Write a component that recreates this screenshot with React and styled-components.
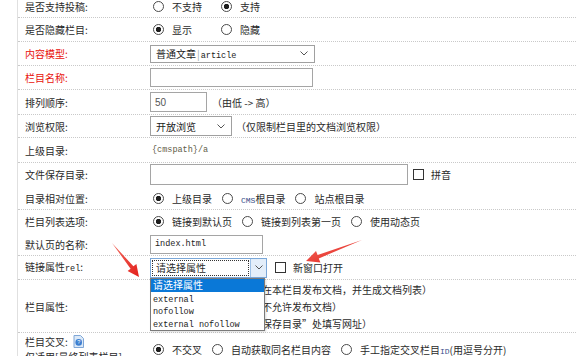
import styled, { createGlobalStyle } from "styled-components";

const Global = createGlobalStyle`
  html, body { margin: 0; padding: 0; background: #fff; }
  body {
    font-family: "Noto Sans CJK SC", "Noto Sans", sans-serif;
    font-size: 10px;
    color: #2a2a2a;
    overflow: hidden;
  }
`;

const Chevron = () => (
  <svg width="8" height="5" viewBox="0 0 8 5">
    <polyline points="0.5,0.5 4,4 7.5,0.5" fill="none" stroke="#555" strokeWidth="1" />
  </svg>
);

const HelpIcon = () => (
  <svg width="11" height="13" viewBox="0 0 11 13">
    <path d="M1 0.5 H7.5 L10.5 3.5 V12.5 H1 Z" fill="#dbe9f8" stroke="#7fa6d6" />
    <circle cx="5.7" cy="7.4" r="3.3" fill="#3d7fd0" />
    <text x="5.7" y="9.4" fontSize="5.5" fill="#fff" textAnchor="middle" fontFamily="Liberation Sans">?</text>
  </svg>
);

const App = () => {
  return (
    <Page>
      <Global />
      <Form>
        <Row $h={22}>
          <Label>是否支持投稿:</Label>
          <Cell>
            <Option $w={58}><Radio />不支持</Option>
            <Option><Radio $on />支持</Option>
          </Cell>
        </Row>
        <Row>
          <Label>是否隐藏栏目:</Label>
          <Cell>
            <Option $w={58}><Radio $on />显示</Option>
            <Option><Radio />隐藏</Option>
          </Cell>
        </Row>
        <Row>
          <Label $red>内容模型:</Label>
          <Cell>
            <SelectBox $w={165} $h={18}>
              <span>普通文章<Pipe>|</Pipe><Mono>article</Mono></span>
              <Chevron />
            </SelectBox>
          </Cell>
        </Row>
        <Row>
          <Label $red>栏目名称:</Label>
          <Cell>
            <Field $w={163} $h={19} />
          </Cell>
        </Row>
        <Row $h={25}>
          <Label>排列顺序:</Label>
          <Cell>
            <Field $w={57} $h={20}><Num>50</Num></Field>
            <Note>（由低 -&gt; 高）</Note>
          </Cell>
        </Row>
        <Row $h={23}>
          <Label>浏览权限:</Label>
          <Cell>
            <SelectBox $w={82} $h={20}>
              <span>开放浏览</span>
              <Chevron />
            </SelectBox>
            <Note $gap={4}>（仅限制栏目里的文档浏览权限）</Note>
          </Cell>
        </Row>
        <Row $h={25}>
          <Label>上级目录:</Label>
          <Cell>
            <Path>{"{cmspath}/a"}</Path>
          </Cell>
        </Row>
        <Row $noLine>
          <Label>文件保存目录:</Label>
          <Cell>
            <Field $w={258} $h={21} />
            <Check $ml={5} />
            <span>拼音</span>
          </Cell>
        </Row>
        <Row $h={23}>
          <Label>目录相对位置:</Label>
          <Cell>
            <Option><Radio $on />上级目录</Option>
            <Option><Radio /><span><Cms>CMS</Cms>根目录</span></Option>
            <Option><Radio />站点根目录</Option>
          </Cell>
        </Row>
        <Row $h={23} $noLine>
          <Label>栏目列表选项:</Label>
          <Cell>
            <Option><Radio $on />链接到默认页</Option>
            <Option><Radio />链接到列表第一页</Option>
            <Option><Radio />使用动态页</Option>
          </Cell>
        </Row>
        <Row $h={23}>
          <Label>默认页的名称:</Label>
          <Cell>
            <Field $w={113} $h={19}><Mono>index.html</Mono></Field>
          </Cell>
        </Row>
        <Row>
          <Label>链接属性<Mono>rel</Mono>:</Label>
          <Cell>
            <RelSelect>
              <Focus>请选择属性</Focus>
              <DropBtn><Chevron /></DropBtn>
            </RelSelect>
            <Check $ml={8} />
            <span>新窗口打开</span>
          </Cell>
        </Row>
        <Row $h={53}>
          <Label>栏目属性:</Label>
          <Stack>
            <Option $line><Radio $on />最终列表栏目（允许在本栏目发布文档，并生成文档列表）</Option>
            <Option $line><Radio />频道封面（栏目本身不允许发布文档）</Option>
            <Option $line><Radio />外部连接（在“文件保存目录”处填写网址）</Option>
          </Stack>
        </Row>
        <Row $h={33} $noLine>
          <Label>
            <LabelLine>栏目交叉: <HelpIcon /></LabelLine>
            <LabelLine>仅适用[最终列表栏目]</LabelLine>
          </Label>
          <Cell>
            <Option><Radio $on />不交叉</Option>
            <Option><Radio />自动获取同名栏目内容</Option>
            <Option><Radio /><span>手工指定交叉栏目<Cms>ID</Cms>(用逗号分开)</span></Option>
          </Cell>
        </Row>
      </Form>

      <DropList>
        <DropItem $active>请选择属性</DropItem>
        <DropItem><Mono>external</Mono></DropItem>
        <DropItem><Mono>nofollow</Mono></DropItem>
        <DropItem><Mono>external nofollow</Mono></DropItem>
      </DropList>

      <Arrows width="576" height="356" viewBox="0 0 576 356">
        <defs>
          <linearGradient id="ar" x1="0" y1="0" x2="1" y2="1">
            <stop offset="0" stopColor="#f26a5e" />
            <stop offset="1" stopColor="#e3201b" />
          </linearGradient>
        </defs>
        <polygon
          points="112,243 133.4,266.3 136.4,263.9 139,277 127.6,271.1 130.6,268.7"
          fill="url(#ar)"
        />
        <polygon
          points="362,240 317.6,255 316,251 306,261 320.4,262.4 318.8,258.4"
          fill="url(#ar)"
        />
      </Arrows>
    </Page>
  );
};

export default App;

const Page = styled.div`
  position: relative;
  width: 576px;
  height: 356px;
  overflow: hidden;
`;

const Form = styled.div`
  margin-left: 17px;
  margin-top: -4px;
  border-left: 1px solid #e0e0e0;
`;

const Row = styled.div`
  display: grid;
  grid-template-columns: 132px 1fr;
  align-items: center;
  box-sizing: border-box;
  height: ${(p) => p.$h || 24}px;
  border-bottom: ${(p) => (p.$noLine ? "1px solid transparent" : "1px dotted #c9c9c9")};
`;

const Label = styled.div`
  padding-left: 7px;
  color: ${(p) => (p.$red ? "#e8120c" : "#2a2a2a")};
  line-height: 15px;
  white-space: nowrap;
`;

const LabelLine = styled.div`
  display: flex;
  align-items: center;
  gap: 5px;
  height: 15px;
`;

const Cell = styled.div`
  display: flex;
  align-items: center;
  white-space: nowrap;
`;

const Stack = styled.div`
  display: flex;
  flex-direction: column;
`;

const Option = styled.label`
  display: inline-flex;
  align-items: center;
  gap: 8px;
  margin-left: 3px;
  margin-right: 7px;
  min-width: ${(p) => (p.$w ? `${p.$w}px` : "auto")};
  height: ${(p) => (p.$line ? "17px" : "auto")};
  white-space: nowrap;
`;

const Radio = styled.span`
  flex: none;
  width: 11px;
  height: 11px;
  box-sizing: border-box;
  border-radius: 50%;
  border: 1px solid #4a4a4a;
  background: ${(p) =>
    p.$on ? "radial-gradient(circle, #1e1e1e 0 2.4px, #fff 3px)" : "#fff"};
`;

const Check = styled.span`
  flex: none;
  width: 11px;
  height: 11px;
  box-sizing: border-box;
  border: 1px solid #333;
  background: #fff;
  margin-left: ${(p) => p.$ml}px;
  margin-right: 7px;
`;

const Field = styled.div`
  box-sizing: border-box;
  width: ${(p) => p.$w}px;
  height: ${(p) => p.$h}px;
  border: 1px solid #a5a5a5;
  background: #fff;
  display: flex;
  align-items: center;
  padding: 0 4px;
`;

const SelectBox = styled.div`
  box-sizing: border-box;
  width: ${(p) => p.$w}px;
  height: ${(p) => p.$h}px;
  border: 1px solid #a0a0a0;
  background: #fff;
  display: flex;
  align-items: center;
  justify-content: space-between;
  padding: 0 6px 0 5px;
  color: #1a1a1a;
`;

const RelSelect = styled.div`
  box-sizing: border-box;
  width: 117px;
  height: 20px;
  border: 1px solid #7aa7d8;
  background: #fff;
  display: flex;
  align-items: stretch;
`;

const Focus = styled.div`
  flex: 1;
  margin: 1px;
  border: 1px dotted #333;
  display: flex;
  align-items: center;
  padding-left: 3px;
`;

const DropBtn = styled.div`
  width: 15px;
  background: #e3eefa;
  border-left: 1px solid #9cc1e8;
  display: flex;
  align-items: center;
  justify-content: center;
`;

const Pipe = styled.span`
  color: #9aa;
  margin: 0 1px;
`;

const Mono = styled.span`
  font-family: "Liberation Mono", "DejaVu Sans Mono", monospace;
  font-size: 8.5px;
  color: #222;
`;

const Cms = styled.span`
  font-family: "Liberation Mono", monospace;
  font-size: 8px;
  color: #3a4f8a;
`;

const Path = styled.span`
  font-family: "Liberation Mono", monospace;
  font-size: 8.5px;
  color: #5f6048;
  padding-left: 2px;
`;

const Num = styled.span`
  font-family: "Liberation Sans", sans-serif;
  font-size: 10px;
  color: #555;
`;

const Note = styled.span`
  margin-left: ${(p) => p.$gap ?? 5}px;
`;

const DropList = styled.div`
  position: absolute;
  left: 150px;
  top: 278px;
  width: 115px;
  box-sizing: border-box;
  border: 1px solid #7a7a7a;
  background: #fff;
  padding-bottom: 1px;
  box-shadow: 1px 1px 2px rgba(0, 0, 0, 0.15);
`;

const DropItem = styled.div`
  height: 12.5px;
  line-height: 12.5px;
  padding-left: 2px;
  white-space: nowrap;
  background: ${(p) => (p.$active ? "#0a78d7" : "transparent")};
  color: ${(p) => (p.$active ? "#fff" : "#222")};
`;

const Arrows = styled.svg`
  position: absolute;
  left: 0;
  top: 0;
  pointer-events: none;
`;
